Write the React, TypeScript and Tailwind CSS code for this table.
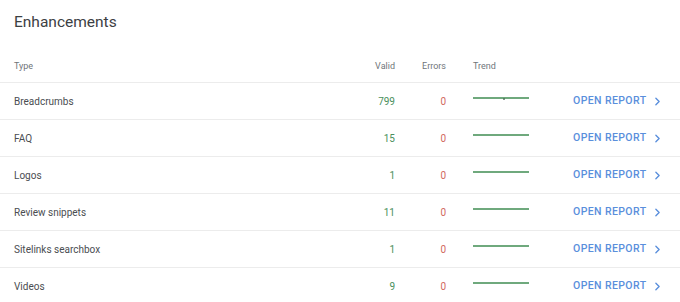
import { ChevronRight } from "lucide-react";

interface Row {
  type: string;
  valid: number;
  errors: number;
  dot?: boolean;
}

const rows: Row[] = [
  { type: "Breadcrumbs", valid: 799, errors: 0, dot: true },
  { type: "FAQ", valid: 15, errors: 0 },
  { type: "Logos", valid: 1, errors: 0 },
  { type: "Review snippets", valid: 11, errors: 0 },
  { type: "Sitelinks searchbox", valid: 1, errors: 0 },
  { type: "Videos", valid: 9, errors: 0 },
];

function Trend({ dot }: { dot?: boolean }) {
  return (
    <svg width="56" height="6" viewBox="0 0 56 6" className="block -mt-[6px]">
      <line x1="0" y1="3" x2="56" y2="3" stroke="#6fa97d" strokeWidth="2" />
      {dot && <circle cx="31" cy="4" r="0.9" fill="#4c6b55" />}
    </svg>
  );
}

export default function App() {
  return (
    <div className="w-[680px] h-[302px] overflow-hidden bg-white font-['Roboto',sans-serif]">
      <h1 className="px-[14px] pt-[12px] text-[15.5px] leading-[20px] text-[#3c4043]">Enhancements</h1>

      <div className="mt-[20px]">
        {/* Header */}
        <div className="flex h-[31px] items-center border-b border-[#ececec] px-[14px] text-[9px] text-[#70757a]">
          <div className="w-[331px]">Type</div>
          <div className="w-[50px] text-right">Valid</div>
          <div className="w-[51px] text-right">Errors</div>
          <div className="ml-[27px]">Trend</div>
        </div>

        {rows.map((r) => (
          <div
            key={r.type}
            className="flex h-[37px] items-center border-b border-[#ececec] px-[14px] text-[10px]"
          >
            <div className="w-[331px] text-[#4a4d51]">{r.type}</div>
            <div className="w-[50px] text-right text-[#4a8f5c]">{r.valid}</div>
            <div className="w-[51px] text-right text-[#d1695d]">{r.errors}</div>
            <div className="ml-[27px] w-[100px] shrink-0">
              <Trend dot={r.dot} />
            </div>
            <div className="flex shrink-0 items-center gap-[5px] whitespace-nowrap text-[10.5px] font-medium tracking-[0.4px] text-[#5a8fdc]">
              OPEN REPORT
              <ChevronRight size={13} strokeWidth={2.5} />
            </div>
          </div>
        ))}
      </div>
    </div>
  );
}
